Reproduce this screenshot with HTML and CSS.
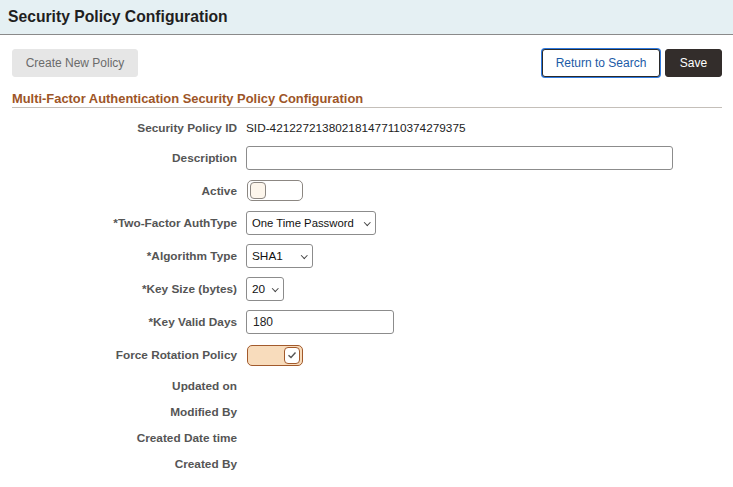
FILE: index.html
```html
<!DOCTYPE html>
<html lang="en">
<head>
    <meta charset="UTF-8">
    <title>Security Policy Configuration</title>
    <link rel="stylesheet" href="styles.css">
</head>
<body>
    <div class="page-header">
        <h1>Security Policy Configuration</h1>
    </div>
    <div class="content">
        <div class="toolbar">
            <button class="btn btn-disabled">Create New Policy</button>
            <div class="toolbar-right">
                <button class="btn btn-secondary">Return to Search</button>
                <button class="btn btn-primary">Save</button>
            </div>
        </div>

        <h2 class="section-title">Multi-Factor Authentication Security Policy Configuration</h2>

        <div class="form">
            <div class="row row-text">
                <label>Security Policy ID</label>
                <span class="value">SID-421227213802181477110374279375</span>
            </div>
            <div class="row">
                <label>Description</label>
                <input type="text" class="input input-wide">
            </div>
            <div class="row">
                <label>Active</label>
                <span class="toggle"><span class="knob"></span></span>
            </div>
            <div class="row row-short">
                <label>*Two-Factor AuthType</label>
                <span class="select select-auth">One Time Password</span>
            </div>
            <div class="row">
                <label>*Algorithm Type</label>
                <span class="select select-algo">SHA1</span>
            </div>
            <div class="row">
                <label>*Key Size (bytes)</label>
                <span class="select select-size">20</span>
            </div>
            <div class="row">
                <label>*Key Valid Days</label>
                <input type="text" class="input input-days" value="180">
            </div>
            <div class="row row-tall">
                <label>Force Rotation Policy</label>
                <span class="toggle on">
                    <span class="knob">
                        <svg width="10" height="8" viewBox="0 0 10 8"><path d="M1.5 4.2 L4 6.5 L8.5 1.5" fill="none" stroke="#555" stroke-width="1.4"/></svg>
                    </span>
                </span>
            </div>
            <div class="row row-text">
                <label>Updated on</label>
            </div>
            <div class="row row-text">
                <label>Modified By</label>
            </div>
            <div class="row row-text">
                <label>Created Date time</label>
            </div>
            <div class="row row-text">
                <label>Created By</label>
            </div>
        </div>
    </div>
</body>
</html>
```

FILE: styles.css
```css
body {
    margin: 0;
    font-family: 'Liberation Sans', Arial, sans-serif;
    font-size: 12px;
    color: #222;
    background-color: #fff;
}
.page-header {
    height: 34px;
    background-color: #e5f0f3;
    border-bottom: 1px solid #8a8a8a;
    display: flex;
    align-items: center;
    padding-left: 8px;
}
.page-header h1 {
    margin: 0;
    font-size: 15.7px;
    font-weight: bold;
    color: #1f1f1f;
}
.content {
    padding: 0 11px 0 12px;
}
.toolbar {
    display: flex;
    justify-content: space-between;
    align-items: center;
    margin-top: 14px;
}
.toolbar-right {
    display: flex;
    gap: 5px;
}
.btn {
    box-sizing: border-box;
    height: 28px;
    font-family: 'Liberation Sans', Arial, sans-serif;
    font-size: 12px;
    border-radius: 3px;
    padding: 0;
    white-space: nowrap;
    cursor: pointer;
}
.btn-disabled {
    background-color: #e6e6e6;
    border: 1px solid #e6e6e6;
    color: #6b6b6b;
    width: 126px;
}
.btn-secondary {
    background-color: #fff;
    border: 1px solid #2a2a2a;
    color: #1c5aa6;
    box-shadow: 0 0 0 1px #2f7ae0;
    width: 118px;
}
.btn-primary {
    background-color: #332d2b;
    border: 1px solid #332d2b;
    color: #fff;
    width: 57px;
}
.section-title {
    margin: 14px 0 0;
    font-size: 12.9px;
    line-height: 16px;
    font-weight: bold;
    color: #9d5527;
    border-bottom: 1px solid #c4bfb9;
}
.form {
    margin-top: 6px;
}
.row {
    display: flex;
    align-items: center;
    gap: 9px;
    height: 33px;
}
.row-short {
    height: 32px;
}
.row-tall {
    height: 34px;
}
.row-text {
    height: 27px;
}
.row-text:nth-last-child(-n+3) {
    height: 26px;
}
.row label {
    width: 225px;
    text-align: right;
    font-size: 11.8px;
    font-weight: bold;
    color: #555;
    flex-shrink: 0;
}
.value {
    font-size: 11.8px;
    color: #222;
}
.input {
    box-sizing: border-box;
    height: 24px;
    border: 1px solid #8c8c8c;
    border-radius: 3px;
    font-family: 'Liberation Sans', Arial, sans-serif;
    font-size: 12px;
    padding: 0 6px;
    color: #222;
}
.input-wide {
    width: 427px;
}
.input-days {
    width: 148px;
}
.select {
    box-sizing: border-box;
    height: 24px;
    border: 1px solid #8c8c8c;
    border-radius: 3px;
    display: flex;
    align-items: center;
    padding-left: 5px;
    font-size: 11.8px;
    color: #111;
    position: relative;
    background: #fff;
}
.select::after {
    content: '';
    position: absolute;
    right: 6px;
    top: 8px;
    width: 3.5px;
    height: 3.5px;
    border-right: 1px solid #444;
    border-bottom: 1px solid #444;
    transform: rotate(45deg);
}
.select-auth {
    width: 130px;
    font-size: 11.3px;
}
.select-algo {
    width: 67px;
}
.select-size {
    width: 38px;
}
.toggle {
    box-sizing: border-box;
    width: 56px;
    height: 21px;
    border: 1px solid #8c8782;
    border-radius: 5px;
    margin-left: 1px;
    display: flex;
    align-items: center;
    padding: 0 2px;
    background: #fff;
}
.toggle .knob {
    box-sizing: border-box;
    width: 16px;
    height: 17px;
    border: 1px solid #8c8782;
    border-radius: 4px;
    background-color: #fdf6ec;
    display: flex;
    align-items: center;
    justify-content: center;
}
.toggle.on {
    background-color: #f8dcbc;
    border-color: #a25a2c;
    justify-content: flex-end;
}
.toggle.on .knob {
    background-color: #fff;
    border-color: #a25a2c;
}
```
